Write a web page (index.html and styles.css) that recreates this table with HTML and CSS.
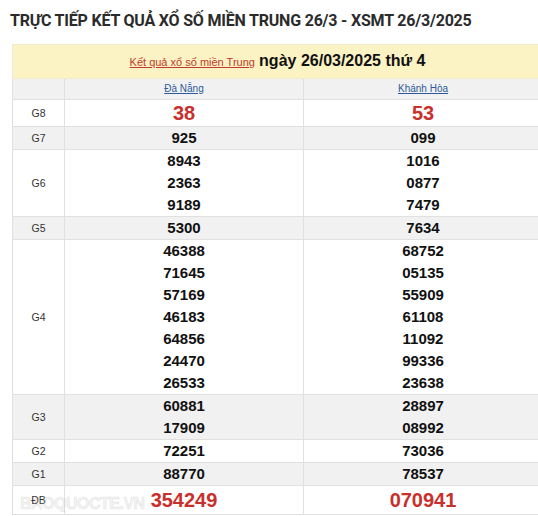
FILE: index.html
```html
<!DOCTYPE html>
<html lang="vi">
<head>
<meta charset="utf-8">
<title>XSMT 26/3/2025</title>
<link rel="stylesheet" href="styles.css">
</head>
<body>
<div class="page">
  <h1 class="title">TRỰC TIẾP KẾT QUẢ XỔ SỐ MIỀN TRUNG 26/3 - XSMT 26/3/2025</h1>
  <div class="board">
    <table class="kq">
      <colgroup><col class="c-label"><col class="c-prov"><col class="c-prov"></colgroup>
      <tr class="r-head">
        <td colspan="3"><a class="head-link" href="#">Kết quả xổ số miền Trung</a> <span class="head-date">ngày 26/03/2025 thứ 4</span></td>
      </tr>
      <tr class="r-prov alt">
        <td></td>
        <td><a class="prov" href="#">Đà Nẵng</a></td>
        <td><a class="prov" href="#">Khánh Hòa</a></td>
      </tr>
      <tr class="big">
        <td class="lbl">G8</td><td class="red">38</td><td class="red">53</td>
      </tr>
      <tr class="alt">
        <td class="lbl">G7</td><td>925</td><td>099</td>
      </tr>
      <tr>
        <td class="lbl">G6</td>
        <td><div>8943</div><div>2363</div><div>9189</div></td>
        <td><div>1016</div><div>0877</div><div>7479</div></td>
      </tr>
      <tr class="alt">
        <td class="lbl">G5</td><td>5300</td><td>7634</td>
      </tr>
      <tr>
        <td class="lbl">G4</td>
        <td><div>46388</div><div>71645</div><div>57169</div><div>46183</div><div>64856</div><div>24470</div><div>26533</div></td>
        <td><div>68752</div><div>05135</div><div>55909</div><div>61108</div><div>11092</div><div>99336</div><div>23638</div></td>
      </tr>
      <tr class="alt">
        <td class="lbl">G3</td>
        <td><div>60881</div><div>17909</div></td>
        <td><div>28897</div><div>08992</div></td>
      </tr>
      <tr>
        <td class="lbl">G2</td><td>72251</td><td>73036</td>
      </tr>
      <tr class="alt">
        <td class="lbl">G1</td><td>88770</td><td>78537</td>
      </tr>
      <tr class="big db">
        <td class="lbl">ĐB</td><td class="red">354249</td><td class="red">070941</td>
      </tr>
    </table>
    <div class="watermark">BAOQUOCTE.VN</div>
  </div>
</div>
</body>
</html>
```

FILE: styles.css
```css
html, body {
  margin: 0;
  padding: 0;
  background: #fff;
  overflow: hidden;
}
.page {
  width: 538px;
  overflow: hidden;
}
.title {
  margin: 0;
  padding: 10px 0 0 10px;
  font-family: Roboto, "Liberation Sans", sans-serif;
  font-weight: 700;
  font-size: 16px;
  line-height: 22px;
  color: #2b2b2b;
  white-space: nowrap;
  letter-spacing: -0.2px;
}
.board {
  position: relative;
  margin: 12px 0 0 12px;
  width: 530px;
}
.kq {
  width: 530px;
  border-collapse: collapse;
  table-layout: fixed;
  font-family: "Liberation Sans", Arial, sans-serif;
}
.c-label { width: 52px; }
.c-prov { width: 239px; }
.kq td {
  border: 1px solid #e0e0e0;
  text-align: center;
  padding: 0;
  font-weight: 700;
  font-size: 15px;
  line-height: 22px;
  color: #111;
}
.kq tr.alt td { background: #f1f1f1; }
.kq td.lbl {
  font-weight: 400;
  font-size: 10.5px;
  color: #333;
}
.r-head td {
  background: #fcf3c4;
  border-color: #f3ead0;
  height: 32px;
  line-height: 32px;
}
.head-link {
  font-weight: 400;
  font-size: 11px;
  color: #c0392b;
  text-decoration: underline;
}
.head-date {
  font-size: 16px;
  color: #111;
}
.r-prov td {
  line-height: 20px;
  font-size: 10px;
}
.prov {
  color: #2c5a9a;
  font-weight: 400;
  text-decoration: underline;
}
.kq tr.big td {
  line-height: 26px;
}
.kq tr.big td.red {
  font-size: 20px;
  color: #c9302c;
}
.kq tr.db td {
  line-height: 28px;
}
.watermark {
  position: absolute;
  left: 8px;
  bottom: 1px;
  font-family: "Liberation Sans", Arial, sans-serif;
  font-size: 16px;
  font-weight: 700;
  line-height: 20px;
  color: rgba(200, 200, 200, 0.2);
  -webkit-text-stroke: 0.6px rgba(170, 170, 170, 0.3);
  letter-spacing: -0.5px;
  pointer-events: none;
}
```
